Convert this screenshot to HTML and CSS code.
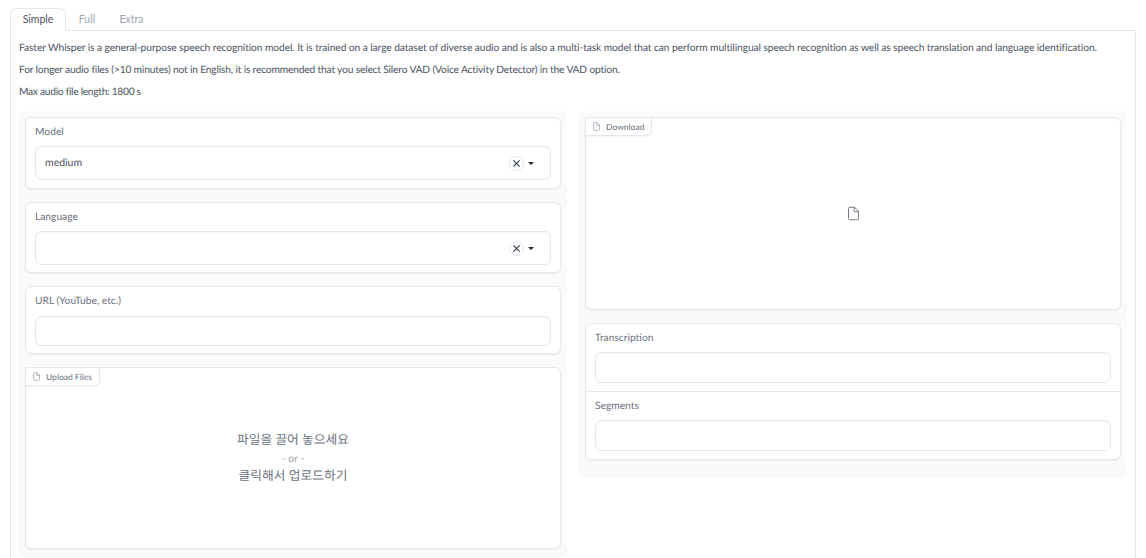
FILE: index.html
```html
<!DOCTYPE html>
<html lang="en">
<head>
<meta charset="utf-8">
<title>Faster Whisper</title>
<link rel="stylesheet" href="styles.css">
</head>
<body>
<nav class="tabs">
  <button class="tab active">Simple</button>
  <button class="tab">Full</button>
  <button class="tab">Extra</button>
</nav>
<main class="tabpanel">
  <div class="intro">
    <p class="line-a">Faster Whisper is a general-purpose speech recognition model. It is trained on a large dataset of diverse audio and is also a multi-task model that can perform multilingual speech recognition as well as speech translation and language identification.</p>
    <p class="line-b">For longer audio files (&gt;10 minutes) not in English, it is recommended that you select Silero VAD (Voice Activity Detector) in the VAD option.</p>
    <p class="line-c">Max audio file length: 1800 s</p>
  </div>
  <div class="columns">
    <section class="col left">
      <div class="card field model">
        <label class="label">Model</label>
        <div class="input select"><span class="value">medium</span>
          <span class="clear"><svg viewBox="0 0 10 10" width="9" height="9"><path d="M1.5 1.5l7 7M8.5 1.5l-7 7" stroke="#374151" stroke-width="1.3" fill="none"/></svg></span>
          <span class="caret"></span>
        </div>
      </div>
      <div class="card field">
        <label class="label">Language</label>
        <div class="input select"><span class="value"></span>
          <span class="clear"><svg viewBox="0 0 10 10" width="9" height="9"><path d="M1.5 1.5l7 7M8.5 1.5l-7 7" stroke="#374151" stroke-width="1.3" fill="none"/></svg></span>
          <span class="caret"></span>
        </div>
      </div>
      <div class="card field url">
        <label class="label">URL (YouTube, etc.)</label>
        <div class="input"></div>
      </div>
      <div class="card file upload">
        <div class="badge"><svg class="file-s" viewBox="0 0 24 24"><path d="M13 2H6a2 2 0 0 0-2 2v16a2 2 0 0 0 2 2h12a2 2 0 0 0 2-2V9z"/><path d="M13 2v7h7"/></svg>Upload Files</div>
        <div class="drop">
          <div class="ko">파일을 끌어 놓으세요</div>
          <div class="or">- or -</div>
          <div class="ko">클릭해서 업로드하기</div>
        </div>
      </div>
    </section>
    <section class="col">
      <div class="card file download">
        <div class="badge"><svg class="file-s" viewBox="0 0 24 24"><path d="M13 2H6a2 2 0 0 0-2 2v16a2 2 0 0 0 2 2h12a2 2 0 0 0 2-2V9z"/><path d="M13 2v7h7"/></svg>Download</div>
        <div class="empty"><svg class="file-l" viewBox="0 0 24 24"><path d="M13 2H6a2 2 0 0 0-2 2v16a2 2 0 0 0 2 2h12a2 2 0 0 0 2-2V9z"/><path d="M13 2v7h7"/></svg></div>
      </div>
      <div class="card group">
        <div class="sub first"><label class="label">Transcription</label><div class="input"></div></div>
        <div class="sub"><label class="label">Segments</label><div class="input"></div></div>
      </div>
    </section>
  </div>
</main>
</body>
</html>
```
FILE: styles.css
```css
* { box-sizing: border-box; }
html, body { margin: 0; height: 558px; overflow: hidden; background: #fff; }
body {
  padding: 8px 10px 0;
  font-family: "Lato", "Noto Sans CJK KR", sans-serif;
  font-size: 10.5px;
  color: #4b5563;
  text-rendering: geometricPrecision;
}
.tabs { display: flex; height: 23px; position: relative; z-index: 1; }
.tab {
  border: 1px solid transparent;
  border-bottom: 0;
  background: none;
  font: inherit;
  color: #9ca3af;
  padding: 0 0 2px;
  height: 23px;
  border-radius: 6px 6px 0 0;
}
.tab.active { color: #4b5563; border-color: #e5e7eb; background: #fff; width: 56px; }
.tab:nth-child(2) { width: 42px; }
.tab:nth-child(3) { width: 47px; }
.tabpanel {
  border: 1px solid #e5e7eb;
  border-bottom: 0;
  margin-top: -1px;
  height: 528px;
  padding: 7px 8px 0;
}
.intro { height: 73px; padding-top: 4px; font-size: 10.25px; }
.intro p { margin: 0 0 9px; line-height: 13px; height: 13px; white-space: nowrap; }
.line-a { letter-spacing: -0.09px; }
.line-b { letter-spacing: -0.18px; }
.line-c { letter-spacing: -0.3px; }
.columns { display: grid; grid-template-columns: 548px 548px; gap: 12px; align-items: start; }
.col {
  background: #f9fafb;
  border-radius: 6px;
  padding: 6px 6px 18px;
  display: flex;
  flex-direction: column;
  gap: 13px;
}
.col.left { padding-bottom: 9px; }
.card {
  background: #fff;
  border: 1px solid #e5e7eb;
  border-radius: 6px;
  box-shadow: 0 1px 2px rgba(0,0,0,.05);
}
.field { padding: 6px 9px 8px; height: 71px; }
.field.model { height: 72px; }
.field.url { height: 68px; }
.label { display: block; height: 14px; line-height: 14px; margin: 1px 0 7px; color: #6b7280; font-size: 10.25px; }
.input {
  height: 34px;
  border: 1px solid #e5e7eb;
  border-radius: 6px;
  background: #fff;
  box-shadow: inset 0 1px 2px rgba(0,0,0,.04);
}
.field.url .label { margin-bottom: 8px; }
.field.url .input { height: 30px; }
.select { display: flex; align-items: center; padding: 0 16px 0 9px; }
.value { flex: 1; color: #4b5563; }
.clear {
  width: 15px; height: 15px;
  border: 1px solid #e5e7eb;
  border-radius: 50%;
  display: flex; align-items: center; justify-content: center;
  margin-right: 4px;
}
.caret {
  width: 0; height: 0;
  border-left: 3px solid transparent;
  border-right: 3px solid transparent;
  border-top: 3px solid #1f2937;
}
.file { position: relative; }
.upload { height: 182px; }
.download { height: 193px; }
.badge {
  position: absolute;
  top: -1px; left: -1px;
  height: 19px;
  padding: 0 7px 0 6px;
  display: flex; align-items: center;
  background: #fff;
  border: 1px solid #e5e7eb;
  border-radius: 0 0 6px 0;
  box-shadow: 0 1px 2px rgba(0,0,0,.05);
  font-size: 8.5px;
  color: #6b7280;
}
.file-s { width: 9px; height: 9px; margin-right: 5px; fill: none; stroke: #9ca3af; stroke-width: 2; stroke-linecap: round; stroke-linejoin: round; }
.file-l { width: 15px; height: 15px; fill: none; stroke: #6b7280; stroke-width: 1.5; stroke-linecap: round; stroke-linejoin: round; }
.drop {
  height: 100%;
  display: flex; flex-direction: column; align-items: center; justify-content: center;
  padding-bottom: 2px;
  color: #6b7280;
}
.ko { font-size: 12.75px; line-height: 18px; }
.or { color: #9ca3af; font-size: 10.5px; line-height: 18px; margin: 2px 0 -2px; }
.empty { height: 100%; display: flex; align-items: center; justify-content: center; }
.group { height: 137px; overflow: hidden; }
.sub { padding: 6px 9px 8px; height: 68px; }
.sub.first { border-bottom: 1px solid #e5e7eb; }
.sub .input { height: 31px; }
```
